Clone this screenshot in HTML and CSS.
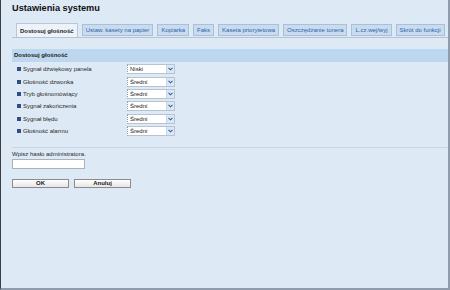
FILE: index.html
```html
<!DOCTYPE html>
<html lang="pl">
<head>
<meta charset="utf-8">
<title>Ustawienia systemu</title>
<link rel="stylesheet" href="styles.css">
</head>
<body>
<div class="page">
  <h1 class="title">Ustawienia systemu</h1>
  <div class="tabs">
    <span class="tab active">Dostosuj głośność</span>
    <span class="tab">Ustaw. kasety na papier</span>
    <span class="tab">Kopiarka</span>
    <span class="tab">Faks</span>
    <span class="tab">Kaseta priorytetowa</span>
    <span class="tab">Oszczędzanie tonera</span>
    <span class="tab">L.cz.wej/wyj</span>
    <span class="tab">Skrót do funkcji</span>
  </div>
  <div class="section-head">Dostosuj głośność</div>
  <div class="rows">
    <div class="row"><span class="bullet"></span><span class="label">Sygnał dźwiękowy panela</span><span class="select"><span class="val">Niski</span><span class="arrow"><svg width="5" height="4" viewBox="0 0 5 4"><path d="M0.5 0.8 L2.5 2.8 L4.5 0.8" fill="none" stroke="#2f5f9e" stroke-width="1.1"/></svg></span></span></div>
    <div class="row"><span class="bullet"></span><span class="label">Głośność dzwonka</span><span class="select"><span class="val">Średni</span><span class="arrow"><svg width="5" height="4" viewBox="0 0 5 4"><path d="M0.5 0.8 L2.5 2.8 L4.5 0.8" fill="none" stroke="#2f5f9e" stroke-width="1.1"/></svg></span></span></div>
    <div class="row"><span class="bullet"></span><span class="label">Tryb głośnomówiący</span><span class="select"><span class="val">Średni</span><span class="arrow"><svg width="5" height="4" viewBox="0 0 5 4"><path d="M0.5 0.8 L2.5 2.8 L4.5 0.8" fill="none" stroke="#2f5f9e" stroke-width="1.1"/></svg></span></span></div>
    <div class="row"><span class="bullet"></span><span class="label">Sygnał zakończenia</span><span class="select"><span class="val">Średni</span><span class="arrow"><svg width="5" height="4" viewBox="0 0 5 4"><path d="M0.5 0.8 L2.5 2.8 L4.5 0.8" fill="none" stroke="#2f5f9e" stroke-width="1.1"/></svg></span></span></div>
    <div class="row"><span class="bullet"></span><span class="label">Sygnał błędu</span><span class="select"><span class="val">Średni</span><span class="arrow"><svg width="5" height="4" viewBox="0 0 5 4"><path d="M0.5 0.8 L2.5 2.8 L4.5 0.8" fill="none" stroke="#2f5f9e" stroke-width="1.1"/></svg></span></span></div>
    <div class="row"><span class="bullet"></span><span class="label">Głośność alarmu</span><span class="select"><span class="val">Średni</span><span class="arrow"><svg width="5" height="4" viewBox="0 0 5 4"><path d="M0.5 0.8 L2.5 2.8 L4.5 0.8" fill="none" stroke="#2f5f9e" stroke-width="1.1"/></svg></span></span></div>
  </div>
  <div class="separator"></div>
  <div class="pw-label">Wpisz hasło administratora.</div>
  <input class="pw-input" type="password">
  <div class="buttons">
    <button class="btn">OK</button>
    <button class="btn">Anuluj</button>
  </div>
</div>
</body>
</html>
```
FILE: styles.css
```css
html, body {
  margin: 0;
  padding: 0;
  background: #dde9f5;
}
.page {
  width: 450px;
  height: 290px;
  box-sizing: border-box;
  border-left: 1px solid #3a3f46;
  border-right: 2px solid #8e9cab;
  border-bottom: 2px solid #8e9cab;
  background: #dde9f5;
  padding-left: 11px;
  font-family: "Liberation Sans", Arial, sans-serif;
  font-size: 6px;
  color: #222;
}
.title {
  margin: 0;
  height: 23px;
  box-sizing: border-box;
  padding-top: 3px;
  font-size: 9.2px;
  line-height: 11px;
  font-weight: bold;
  color: #111;
}
.tabs {
  display: flex;
  align-items: flex-end;
  gap: 4px;
  height: 14px;
  padding-left: 4px;
  border-bottom: 1px solid #b3c4d6;
}
.tab {
  height: 12px;
  box-sizing: border-box;
  margin-bottom: 1px;
  padding: 0 3px;
  display: flex;
  align-items: center;
  background: #c9dcef;
  border: 1px solid #a9c0d7;
  color: #2a62a8;
  white-space: nowrap;
}
.tab.active {
  height: 14px;
  margin-bottom: 0;
  background: #eef3f9;
  border-color: #b8c8d8;
  border-bottom: none;
  color: #222;
  font-weight: bold;
}
.section-head {
  margin-top: 11px;
  height: 13px;
  line-height: 13px;
  padding-left: 2px;
  background: #bdd7ee;
  font-weight: bold;
  color: #1a1a1a;
}
.rows {
  margin-top: 1px;
}
.row {
  display: flex;
  align-items: center;
  height: 12.4px;
}
.bullet {
  width: 4px;
  height: 4px;
  margin-left: 5px;
  margin-right: 2px;
  background: #2c4f86;
}
.label {
  width: 104px;
  color: #2a2a2a;
  white-space: nowrap;
}
.select {
  display: flex;
  width: 48px;
  height: 10px;
  box-sizing: border-box;
  background: #fff;
  border: 1px solid #b7c3cf;
  border-left: 1px dotted #8a96a2;
}
.val {
  flex: 1;
  padding-left: 2px;
  line-height: 8px;
  color: #1a1a1a;
}
.arrow {
  width: 7px;
  display: flex;
  align-items: center;
  justify-content: center;
  background: #dbe7f6;
  border-left: 1px solid #c8d6e6;
}
.separator {
  margin-top: 10px;
  border-top: 1px solid #c6d6e6;
}
.pw-label {
  margin-top: 2px;
  height: 8px;
  line-height: 8px;
  color: #2a2a2a;
}
.pw-input {
  display: block;
  margin: 1px 0 0 0;
  padding: 0;
  width: 73px;
  height: 10px;
  box-sizing: border-box;
  background: #fff;
  border: 1px solid #a6b2be;
  outline: none;
}
.buttons {
  display: flex;
  gap: 5px;
  margin-top: 10px;
}
.btn {
  width: 57px;
  height: 9px;
  box-sizing: border-box;
  padding: 0;
  margin: 0;
  font-family: "Liberation Sans", Arial, sans-serif;
  font-size: 6px;
  line-height: 7px;
  font-weight: bold;
  color: #1a1a1a;
  background: linear-gradient(#ffffff, #e6e6e6);
  border: 1px solid #8c8c8c;
}
```
